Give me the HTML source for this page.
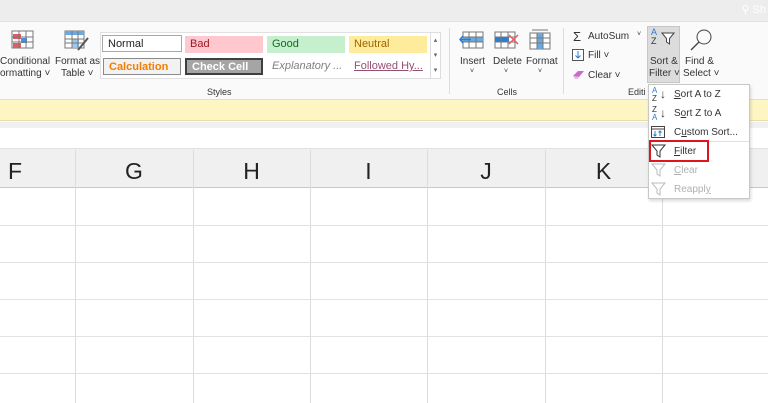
<!DOCTYPE html>
<html><head><style>
*{margin:0;padding:0;box-sizing:border-box}
body{width:768px;height:403px;overflow:hidden;background:#fff;font-family:"Liberation Sans",sans-serif;position:relative;font-size:10px;color:#222}
.a{position:absolute}
.t{position:absolute;white-space:nowrap;font-size:10px;color:#333}
.c{text-align:center}
.st{position:absolute;height:17px;font-size:11px;padding:2px 5px;white-space:nowrap;overflow:hidden}
.col{position:absolute;top:148px;height:40px;font-size:23px;color:#222;text-align:center;line-height:46px}
.vl{position:absolute;top:150px;width:1px;height:253px;background:#dcdcdc}
.hl{position:absolute;left:0;width:768px;height:1px;background:#e2e2e2}
.mi{position:absolute;left:674px;font-size:10px;color:#333}
</style></head><body>
<div class="a" style="left:0;top:0;width:768px;height:22px;background:#ededed;border-bottom:1px solid #e0e0e0"></div>
<div class="a" style="right:2px;top:3px;color:#fff;font-size:11px">⚲ Sh</div>
<div class="a" style="left:0;top:22px;width:768px;height:77px;background:#fafafa"></div>
<!-- conditional formatting icon -->
<svg class="a" style="left:11px;top:30px" width="24" height="20"><rect x="1" y="1" width="21" height="17" fill="#fff" stroke="#777"/><rect x="2" y="4" width="8" height="5" fill="#e35b66"/><rect x="10" y="8" width="6" height="5" fill="#4a90d9"/><rect x="2" y="13" width="8" height="5" fill="#e35b66"/><path d="M1 7H22M1 12H22M8 1V18M15 1V18" stroke="#777"/></svg>
<div class="t" style="left:0;top:56px">Conditional</div>
<div class="t" style="left:0;top:68px">ormatting ˅</div>
<svg class="a" style="left:64px;top:30px" width="26" height="22"><rect x="1" y="1" width="19" height="17" fill="#fff" stroke="#777"/><rect x="1" y="1" width="19" height="4" fill="#6aa9e0"/><rect x="8" y="9" width="7" height="8" fill="#9cc8ef"/><path d="M1 9H20M1 13H20M8 1V18M14 1V18" stroke="#777"/><path d="M24 8L14 20" stroke="#555" stroke-width="2"/></svg>
<div class="t" style="left:55px;top:56px">Format as</div>
<div class="t" style="left:61px;top:68px">Table ˅</div>
<!-- styles gallery -->
<div class="a" style="left:100px;top:32px;width:332px;height:47px;background:#fff;border:1px solid #e0e0e0"></div>
<div class="st" style="left:102px;top:35px;width:80px;background:#fff;border:1px solid #a8a8a8;color:#222">Normal</div>
<div class="st" style="left:185px;top:36px;width:78px;background:#ffc7ce;color:#9c1a26">Bad</div>
<div class="st" style="left:267px;top:36px;width:78px;background:#c6efce;color:#166a1c">Good</div>
<div class="st" style="left:349px;top:36px;width:78px;background:#ffeb9c;color:#9c6500">Neutral</div>
<div class="st" style="left:103px;top:58px;width:78px;background:#f2f2f2;border:1px solid #8a8a8a;color:#f57c00;font-weight:bold">Calculation</div>
<div class="st" style="left:185px;top:58px;width:78px;background:#a5a5a5;border:2px solid #3f3f3f;color:#fff;font-weight:bold;padding-top:1px">Check Cell</div>
<div class="st" style="left:267px;top:58px;width:78px;color:#7f7f7f;font-style:italic">Explanatory ...</div>
<div class="st" style="left:349px;top:58px;width:78px;color:#954f72;text-decoration:underline">Followed Hy...</div>
<div class="a" style="left:430px;top:32px;width:11px;height:47px;border:1px solid #ddd;background:#fff;font-size:7px;color:#666;text-align:center;line-height:15px">▴<br>▾<br>▾</div>
<div class="t" style="left:207px;top:87px;font-size:9px">Styles</div>
<div class="a" style="left:449px;top:28px;width:1px;height:66px;background:#ddd"></div>
<!-- cells -->
<svg class="a" style="left:459px;top:30px" width="26" height="20"><rect x="4" y="2" width="20" height="16" fill="#fff" stroke="#777"/><rect x="4" y="7" width="20" height="5" fill="#6aa9e0"/><path d="M4 7H24M4 12H24M10 2V18M17 2V18" stroke="#777"/><path d="M1 9.5H12M4 6L1 9.5L4 13" stroke="#2b7cd3" fill="none" stroke-width="1.5"/></svg>
<div class="t" style="left:460px;top:56px">Insert</div><div class="t" style="left:470px;top:68px;font-size:7px">˅</div>
<svg class="a" style="left:494px;top:30px" width="26" height="20"><rect x="1" y="2" width="20" height="16" fill="#fff" stroke="#777"/><rect x="1" y="7" width="14" height="5" fill="#2b7cd3"/><path d="M1 7H21M1 12H21M7 2V18M14 2V18" stroke="#777"/><path d="M15 5L24 14M24 5L15 14" stroke="#e35b66" stroke-width="1.5"/></svg>
<div class="t" style="left:493px;top:56px">Delete</div><div class="t" style="left:504px;top:68px;font-size:7px">˅</div>
<svg class="a" style="left:529px;top:29px" width="22" height="22"><rect x="1" y="4" width="20" height="16" fill="#fff" stroke="#777"/><rect x="8" y="4" width="6" height="16" fill="#6aa9e0"/><path d="M1 9H21M1 14H21M8 4V20M14 4V20M3 1H19" stroke="#777"/></svg>
<div class="t" style="left:526px;top:56px">Format</div><div class="t" style="left:538px;top:68px;font-size:7px">˅</div>
<div class="t" style="left:497px;top:87px;font-size:9px">Cells</div>
<div class="a" style="left:563px;top:28px;width:1px;height:66px;background:#ddd"></div>
<!-- editing -->
<div class="t" style="left:573px;top:29px;font-size:13px">Σ</div><div class="t" style="left:588px;top:31px">AutoSum</div><div class="t" style="left:637px;top:31px;font-size:7px">˅</div>
<svg class="a" style="left:572px;top:49px" width="12" height="12"><rect x="0.5" y="0.5" width="11" height="11" fill="#fff" stroke="#555"/><path d="M6 2V9M3.5 6.5L6 9L8.5 6.5" stroke="#2b7cd3" fill="none"/></svg>
<div class="t" style="left:588px;top:50px">Fill ˅</div>
<svg class="a" style="left:572px;top:69px" width="13" height="11"><path d="M1 7L6 2L12 2L7 8Z" fill="#c76dc9"/><path d="M1 7L3 10H6L7 8" fill="#e8b9ea"/></svg>
<div class="t" style="left:588px;top:70px">Clear ˅</div>
<div class="t" style="left:628px;top:87px;font-size:9px">Editi</div>
<div class="a" style="left:647px;top:26px;width:33px;height:57px;background:#dcdcdc;border:1px solid #c6c6c6"></div>
<div class="t" style="left:651px;top:28px;font-size:9px;color:#2b7cd3;line-height:9px">A<br><span style="color:#333">Z</span></div>
<svg class="a" style="left:661px;top:32px" width="14" height="13"><path d="M1 1H13L8.5 6.5V12L5.5 10V6.5Z" fill="#fff" stroke="#444"/></svg>
<div class="t" style="left:650px;top:56px">Sort &amp;</div>
<div class="t" style="left:649px;top:68px">Filter ˅</div>
<svg class="a" style="left:688px;top:28px" width="26" height="24"><circle cx="16" cy="9" r="7" fill="none" stroke="#444"/><path d="M11 14L3 22" stroke="#444" stroke-width="1.3"/></svg>
<div class="t" style="left:685px;top:56px">Find &amp;</div>
<div class="t" style="left:683px;top:68px">Select ˅</div>
<!-- yellow bar -->
<div class="a" style="left:0;top:99px;width:768px;height:22px;background:#fdf6c3;border-top:1px solid #eee4a0;border-bottom:1px solid #e6dea8"></div>
<div class="a" style="left:0;top:122px;width:768px;height:6px;background:#f0f0f0"></div>
<div class="a" style="left:0;top:128px;width:768px;height:20px;background:#fff"></div>
<!-- header -->
<div class="a" style="left:0;top:148px;width:768px;height:40px;background:#f0f0f0;border-top:1px solid #e0e0e0;border-bottom:1px solid #c8c8c8"></div>
<div class="col" style="left:0;width:30px">F</div>
<div class="col" style="left:75px;width:118px">G</div>
<div class="col" style="left:193px;width:117px">H</div>
<div class="col" style="left:310px;width:117px">I</div>
<div class="col" style="left:427px;width:118px">J</div>
<div class="col" style="left:545px;width:117px">K</div>
<div class="vl" style="left:75px"></div><div class="vl" style="left:193px"></div><div class="vl" style="left:310px"></div><div class="vl" style="left:427px"></div><div class="vl" style="left:545px"></div><div class="vl" style="left:662px"></div>
<div class="hl" style="top:225px"></div><div class="hl" style="top:262px"></div><div class="hl" style="top:299px"></div><div class="hl" style="top:336px"></div><div class="hl" style="top:373px"></div>
<!-- dropdown -->
<div class="a" style="left:648px;top:84px;width:102px;height:115px;background:#fff;border:1px solid #c8c8c8;box-shadow:1px 2px 3px rgba(0,0,0,.15)"></div>
<div class="t" style="left:652px;top:87px;font-size:8px;line-height:8px;color:#2b7cd3">A<br><span style="color:#333">Z</span></div><div class="t" style="left:660px;top:87px;font-size:12px">↓</div>
<div class="mi" style="top:89px"><u>S</u>ort A to Z</div>
<div class="t" style="left:652px;top:106px;font-size:8px;line-height:8px">Z<br><span style="color:#2b7cd3">A</span></div><div class="t" style="left:660px;top:106px;font-size:12px">↓</div>
<div class="mi" style="top:108px">S<u>o</u>rt Z to A</div>
<svg class="a" style="left:651px;top:126px" width="14" height="12"><rect x="0.5" y="0.5" width="13" height="11" fill="#fff" stroke="#444"/><path d="M0.5 3H13.5" stroke="#444"/><path d="M4 5V10M2.5 8.5L4 10L5.5 8.5M9 10V5M7.5 6.5L9 5L10.5 6.5" stroke="#2b7cd3" fill="none"/></svg>
<div class="mi" style="top:127px">C<u>u</u>stom Sort...</div>
<div class="a" style="left:649px;top:141px;width:100px;height:1px;background:#e0e0e0"></div>
<div class="a" style="left:649px;top:140px;width:60px;height:22px;border:2px solid #e0141e"></div>
<svg class="a" style="left:651px;top:144px" width="15" height="14"><path d="M1 1H14L9 7V13L6 11V7Z" fill="#fff" stroke="#333"/></svg>
<div class="mi" style="top:146px"><u>F</u>ilter</div>
<svg class="a" style="left:651px;top:163px" width="15" height="14"><path d="M1 1H14L9 7V13L6 11V7Z" fill="none" stroke="#bbb"/></svg>
<div class="mi" style="top:165px;color:#b0b0b0"><u>C</u>lear</div>
<svg class="a" style="left:651px;top:182px" width="15" height="14"><path d="M1 1H14L9 7V13L6 11V7Z" fill="none" stroke="#bbb"/></svg>
<div class="mi" style="top:184px;color:#b0b0b0">Reappl<u>y</u></div>
</body></html>
